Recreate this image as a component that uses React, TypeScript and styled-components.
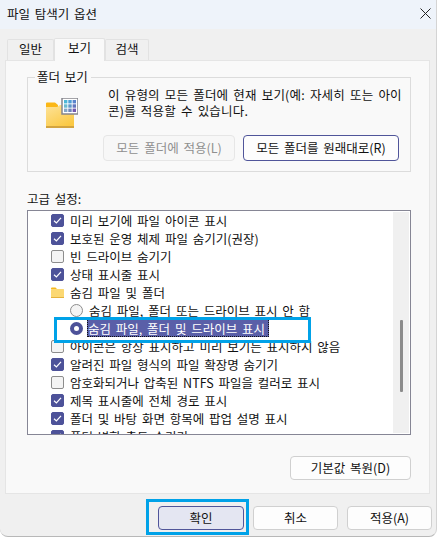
import React from "react";
import styled, { createGlobalStyle } from "styled-components";

const Global = createGlobalStyle`
  html, body { margin: 0; padding: 0; background: #fff; }
  #root { width: 438px; height: 539px; overflow: hidden; }
  * { box-sizing: border-box; }
`;

const Win = styled.div`
  position: relative;
  width: 437px;
  height: 537px;
  background: #f0f0f0;
  border-radius: 0 0 8px 8px;
  border-right: 1px solid #d4d4d4;
  border-bottom: 1px solid #b8b8b8;
  overflow: hidden;
  font-family: "Noto Sans CJK KR", "Noto Sans", sans-serif;
  font-size: 12.5px;
  word-spacing: 2px;
  color: #111;
  display: flex;
  flex-direction: column;
`;

const TitleBar = styled.div`
  height: 29px;
  flex: none;
  background: #eef3fa;
  display: flex;
  align-items: center;
  justify-content: space-between;
  padding: 0 5px 2px 7px;
`;

const TabRow = styled.div`
  height: 31px;
  flex: none;
  display: flex;
  align-items: flex-end;
  padding-left: 7px;
`;

const Tab = styled.div<{ $active?: boolean; $w: number }>`
  width: ${(p) => p.$w}px;
  height: ${(p) => (p.$active ? 23 : 21)}px;
  background: ${(p) => (p.$active ? "#f9f9f9" : "#f0f0f0")};
  border: 1px solid #e2e2e2;
  border-bottom: none;
  border-radius: 2px 2px 0 0;
  display: flex;
  justify-content: center;
  line-height: 18px;
  margin-bottom: ${(p) => (p.$active ? -1 : 0)}px;
  position: relative;
  z-index: ${(p) => (p.$active ? 1 : 0)};
`;

const Panel = styled.div`
  margin: 0 6px 0 5px;
  height: 434px;
  flex: none;
  background: #f9f9f9;
  border: 1px solid #e5e5e5;
  padding: 16px 18px 0 21px;
  display: flex;
  flex-direction: column;
`;

const Group = styled.div`
  height: 95px;
  flex: none;
  border: 1px solid #dcdcdc;
  position: relative;
  display: flex;
`;

const GroupTitle = styled.div`
  position: absolute;
  left: 7px;
  top: -9px;
  background: #f9f9f9;
  padding: 0 3px 0 2px;
  line-height: 16px;
`;

const FolderCol = styled.div`
  width: 80px;
  flex: none;
  padding: 20px 0 0 18px;
`;

const GroupBody = styled.div`
  flex: 1;
  padding-top: 9px;
`;

const Desc = styled.div`
  line-height: 16px;
  height: 33px;
  margin-bottom: 15px;
  white-space: nowrap;
  letter-spacing: 0.2px;
`;

const GroupButtons = styled.div`
  display: flex;
  gap: 8px;
  margin-left: -5px;
`;

const Btn = styled.div<{ $w: number; $h?: number; $state?: "disabled" | "default" | "pressed" }>`
  width: ${(p) => p.$w}px;
  height: ${(p) => p.$h ?? 24}px;
  flex: none;
  display: flex;
  align-items: center;
  justify-content: center;
  border-radius: 4px;
  padding-bottom: 1px;
  white-space: nowrap;
  color: ${(p) => (p.$state === "disabled" ? "#8f8f8f" : "#111")};
  background: ${(p) => (p.$state === "pressed" ? "#e4e6f2" : p.$state === "disabled" ? "#f7f7f7" : "#fdfdfd")};
  border: 1px solid
    ${(p) => (p.$state === "default" || p.$state === "pressed" ? "#50559a" : p.$state === "disabled" ? "#e6e6e6" : "#d0d0d0")};
`;

const AdvLabel = styled.div`
  margin-top: 19px;
  line-height: 16px;
  height: 19px;
`;

const List = styled.div`
  position: relative;
  width: 384px;
  height: 225px;
  flex: none;
  background: #fff;
  border: 1px solid #868695;
  overflow: hidden;
`;

const Row = styled.div<{ $indent?: number }>`
  height: 18px;
  display: flex;
  align-items: center;
  padding-left: ${(p) => p.$indent ?? 23}px;
  gap: 5px;
  white-space: nowrap;
`;

const Check = styled.div<{ $on?: boolean }>`
  width: 13px;
  height: 13px;
  flex: none;
  border-radius: 2px;
  background: ${(p) => (p.$on ? "#4d5299" : "#f4f4f4")};
  border: 1px solid ${(p) => (p.$on ? "#4d5299" : "#8d8d8d")};
  display: flex;
  align-items: center;
  justify-content: center;
`;

const Radio = styled.div<{ $on?: boolean }>`
  width: 13px;
  height: 13px;
  flex: none;
  border-radius: 50%;
  background: ${(p) => (p.$on ? "#fff" : "#f4f4f4")};
  border: ${(p) => (p.$on ? "4px solid #4d5299" : "1px solid #8d8d8d")};
`;

const RowText = styled.span<{ $sel?: boolean }>`
  line-height: 16px;
  padding: 2px 1px 0;
  ${(p) =>
    p.$sel
      ? `background:#5a5fa8;color:#fff;outline:1px dotted #111;outline-offset:-1px;margin-left:-1px;padding-right:4px;`
      : ""}
`;

const Track = styled.div`
  position: absolute;
  right: 1px;
  top: 1px;
  bottom: 1px;
  width: 16px;
  background: #f0f0f0;
  display: flex;
  justify-content: center;
`;

const Thumb = styled.div`
  width: 3px;
  height: 72px;
  margin-top: 108px;
  background: #8b8b8b;
  border-radius: 1px;
`;

const RestoreRow = styled.div`
  display: flex;
  justify-content: flex-end;
  margin-top: 21px;
`;

const Footer = styled.div`
  flex: 1;
  display: flex;
  justify-content: flex-end;
  gap: 9px;
  padding: 12px 4px 0 0;
`;

const Highlight = styled.div<{ $x: number; $y: number; $w: number; $h: number }>`
  position: absolute;
  left: ${(p) => p.$x}px;
  top: ${(p) => p.$y}px;
  width: ${(p) => p.$w}px;
  height: ${(p) => p.$h}px;
  border: 3px solid #00a2e8;
  pointer-events: none;
`;

const CheckMark = () => (
  <svg width="9" height="9" viewBox="0 0 9 9" fill="none">
    <path d="M1 4.8 L3.4 7 L8 1.8" stroke="#fff" strokeWidth="1.2" />
  </svg>
);

const FolderSmall = () => (
  <svg width="13" height="11" viewBox="0 0 13 11" style={{ flex: "none" }}>
    <path d="M0 1.5a1 1 0 0 1 1-1h3.5l1.5 1.5H0z" fill="#f5b81f" />
    <rect x="0" y="2" width="13" height="9" rx="0.5" fill="#fbd873" />
    <rect x="0" y="10" width="13" height="1" fill="#e5b23c" />
  </svg>
);

const FolderBig = () => (
  <svg width="32" height="30" viewBox="0 0 32 30">
    <defs>
      <linearGradient id="fg" x1="0" y1="0" x2="0.6" y2="1">
        <stop offset="0" stopColor="#fde39a" />
        <stop offset="1" stopColor="#fbc944" />
      </linearGradient>
    </defs>
    <path d="M0 5.5 a1 1 0 0 1 1-1 h8 l3 2.5 v2 H0z" fill="#fbb716" />
    <path d="M0 9 H11 L14 7 H28 V30 H0z" fill="url(#fg)" />
    <rect x="0" y="28" width="28" height="2" fill="#d3a440" />
    <rect x="16" y="0" width="16" height="16" fill="#fff" stroke="#85858c" strokeWidth="1.5" />
    <rect x="18" y="2" width="3.4" height="3.4" fill="#4cb7d8" />
    <rect x="22.3" y="2" width="3.4" height="3.4" fill="#4f9fd6" />
    <rect x="26.6" y="2" width="3.4" height="3.4" fill="#5a84cc" />
    <rect x="18" y="6.3" width="3.4" height="3.4" fill="#6bbcd0" />
    <rect x="22.3" y="6.3" width="3.4" height="3.4" fill="#5e97c8" />
    <rect x="26.6" y="6.3" width="3.4" height="3.4" fill="#6275bd" />
    <rect x="18" y="10.6" width="3.4" height="3.4" fill="#86a8c6" />
    <rect x="22.3" y="10.6" width="3.4" height="3.4" fill="#6f86bb" />
    <rect x="26.6" y="10.6" width="3.4" height="3.4" fill="#7359ae" />
  </svg>
);

const CheckRow = ({ on, children }: { on?: boolean; children: React.ReactNode }) => (
  <Row>
    <Check $on={on}>{on && <CheckMark />}</Check>
    <RowText>{children}</RowText>
  </Row>
);

export default function App() {
  return (
    <>
      <Global />
      <Win>
        <TitleBar>
          <span>파일 탐색기 옵션</span>
          <svg width="11" height="11" viewBox="0 0 11 11" fill="none">
            <path d="M.5.5l10 10M10.5.5l-10 10" stroke="#222" strokeWidth="1" />
          </svg>
        </TitleBar>
        <TabRow>
          <Tab $w={47}>일반</Tab>
          <Tab $w={51} $active>보기</Tab>
          <Tab $w={44}>검색</Tab>
        </TabRow>
        <Panel>
          <Group>
            <GroupTitle>폴더 보기</GroupTitle>
            <FolderCol>
              <FolderBig />
            </FolderCol>
            <GroupBody>
              <Desc>
                이 유형의 모든 폴더에 현재 보기(예: 자세히 또는 아이
                <br />
                콘)를 적용할 수 있습니다.
              </Desc>
              <GroupButtons>
                <Btn $w={132} $h={26} $state="disabled">모든 폴더에 적용(L)</Btn>
                <Btn $w={156} $h={26} $state="default">모든 폴더를 원래대로(R)</Btn>
              </GroupButtons>
            </GroupBody>
          </Group>
          <AdvLabel>고급 설정:</AdvLabel>
          <List>
            <CheckRow on>미리 보기에 파일 아이콘 표시</CheckRow>
            <CheckRow on>보호된 운영 체제 파일 숨기기(권장)</CheckRow>
            <CheckRow>빈 드라이브 숨기기</CheckRow>
            <CheckRow on>상태 표시줄 표시</CheckRow>
            <Row>
              <FolderSmall />
              <RowText>숨김 파일 및 폴더</RowText>
            </Row>
            <Row $indent={42}>
              <Radio />
              <RowText>숨김 파일, 폴더 또는 드라이브 표시 안 함</RowText>
            </Row>
            <Row $indent={42}>
              <Radio $on />
              <RowText $sel>숨김 파일, 폴더 및 드라이브 표시</RowText>
            </Row>
            <CheckRow>아이콘은 항상 표시하고 미리 보기는 표시하지 않음</CheckRow>
            <CheckRow on>알려진 파일 형식의 파일 확장명 숨기기</CheckRow>
            <CheckRow>암호화되거나 압축된 NTFS 파일을 컬러로 표시</CheckRow>
            <CheckRow on>제목 표시줄에 전체 경로 표시</CheckRow>
            <CheckRow on>폴더 및 바탕 화면 항목에 팝업 설명 표시</CheckRow>
            <CheckRow on>폴더 병합 충돌 숨기기</CheckRow>
            <Track>
              <Thumb />
            </Track>
          </List>
          <RestoreRow>
            <Btn $w={121}>기본값 복원(D)</Btn>
          </RestoreRow>
        </Panel>
        <Footer>
          <Btn $w={86} $state="pressed">확인</Btn>
          <Btn $w={85}>취소</Btn>
          <Btn $w={85}>적용(A)</Btn>
        </Footer>
        <Highlight $x={54} $y={317} $w={257} $h={26} />
        <Highlight $x={146} $y={499} $w={103} $h={36} />
      </Win>
    </>
  );
}
